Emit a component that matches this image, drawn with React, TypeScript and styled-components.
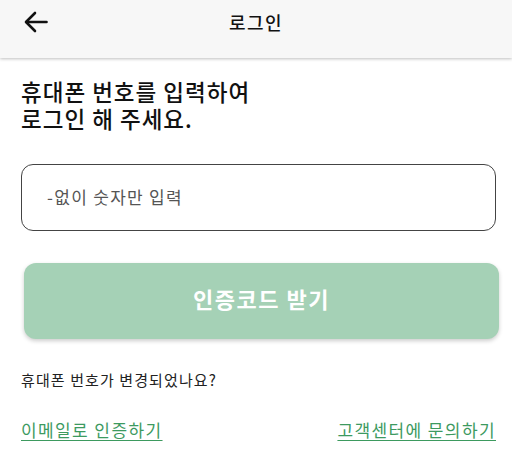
import React from "react";
import styled, { createGlobalStyle } from "styled-components";

const Global = createGlobalStyle`
  html, body { margin: 0; padding: 0; background: #fff; }
  body { font-family: "Noto Sans CJK KR", "Noto Sans", sans-serif; }
  * { box-sizing: border-box; }
`;

const Page = styled.div`
  width: 512px;
  height: 467px;
  display: flex;
  flex-direction: column;
  overflow: hidden;
`;

const Header = styled.header`
  height: 58px;
  background: #f7f7f7;
  box-shadow: 0 1px 3px rgba(0, 0, 0, 0.25);
  display: grid;
  grid-template-columns: 60px 1fr 60px;
  align-items: center;
  position: relative;
  z-index: 1;
`;

const BackButton = styled.button`
  border: none;
  background: none;
  padding: 0 0 14px 24px;
  display: flex;
  align-items: center;
  cursor: pointer;
`;

const Title = styled.h1`
  margin: 0 0 14px;
  text-align: center;
  font-size: 18px;
  font-weight: 500;
  color: #111;
  letter-spacing: 1.5px;
`;

const Body = styled.main`
  display: flex;
  flex-direction: column;
  padding: 20px 16px 0 21px;
`;

const Heading = styled.h2`
  margin: 0;
  font-size: 22.5px;
  font-weight: 500;
  line-height: 27px;
  color: #111;
  letter-spacing: 1px;
`;

const Input = styled.input`
  margin-top: 32px;
  width: 475px;
  height: 67px;
  border: 1px solid #444;
  border-radius: 12px;
  padding: 0 0 2px 25px;
  font-family: inherit;
  font-size: 17px;
  letter-spacing: 1.3px;
  outline: none;
  &::placeholder { color: #555; }
`;

const SubmitButton = styled.button<{ $enabled?: boolean }>`
  margin: 32px 0 0 3px;
  width: 475px;
  height: 76px;
  border: none;
  border-radius: 12px;
  background: ${(p) => (p.$enabled ? "#3d9a5f" : "#a5d1b6")};
  box-shadow: 0 2px 4px rgba(0, 0, 0, 0.2);
  color: #fff;
  font-family: inherit;
  font-size: 22px;
  font-weight: 700;
  padding-bottom: 7px;
  letter-spacing: 1.5px;
`;

const Note = styled.p`
  margin: 30px 0 0;
  font-size: 15px;
  color: #222;
  letter-spacing: 1.1px;
`;

const LinkRow = styled.div`
  margin-top: 27px;
  display: flex;
  justify-content: space-between;
  width: 475px;
`;

const TextLink = styled.a`
  font-size: 17px;
  color: #3d9a5f;
  letter-spacing: 1.4px;
  text-decoration: underline;
  text-underline-offset: 3px;
  text-decoration-thickness: 1px;
`;

export default function App() {
  return (
    <Page>
      <Global />
      <Header>
        <BackButton aria-label="뒤로">
          <svg width="24" height="22" viewBox="0 0 24 22" fill="none" stroke="#111" strokeWidth="2.6" strokeLinecap="round" strokeLinejoin="round">
            <path d="M22.5 11H2.5" />
            <path d="M11 2L2 11l9 9" />
          </svg>
        </BackButton>
        <Title>로그인</Title>
        <div />
      </Header>
      <Body>
        <Heading>
          휴대폰 번호를 입력하여
          <br />
          로그인 해 주세요.
        </Heading>
        <Input placeholder="-없이 숫자만 입력" />
        <SubmitButton>인증코드 받기</SubmitButton>
        <Note>휴대폰 번호가 변경되었나요?</Note>
        <LinkRow>
          <TextLink href="#">이메일로 인증하기</TextLink>
          <TextLink href="#">고객센터에 문의하기</TextLink>
        </LinkRow>
      </Body>
    </Page>
  );
}
